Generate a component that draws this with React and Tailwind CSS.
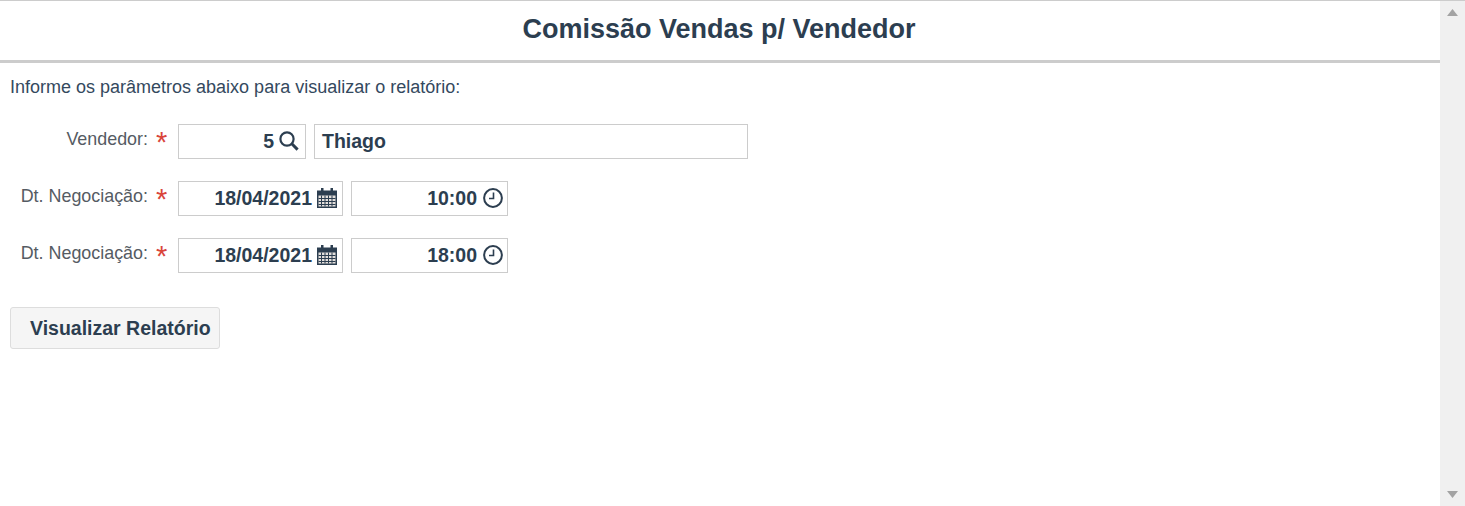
import React from "react";

const SearchIcon = () => (
  <svg width="20" height="20" viewBox="0 0 20 20" fill="none" stroke="#2c3e50" className="shrink-0">
    <circle cx="8" cy="8" r="6.6" strokeWidth="2.2" />
    <path d="M12.8 12.8 L18.6 18.6" strokeWidth="3" />
  </svg>
);

const CalendarIcon = () => (
  <svg width="20" height="20" viewBox="0 0 20 20" className="shrink-0">
    <path fill="#2c3e50" d="M0 2.5h4V0h2.5v2.5h7V0H16v2.5h4V20H0z" />
    <rect x="1.5" y="7.5" width="17" height="11" fill="#e3dfdc" />
    <g fill="#2c3e50">
      <rect x="4" y="7.5" width="1" height="11" />
      <rect x="7.5" y="7.5" width="1" height="11" />
      <rect x="11" y="7.5" width="1" height="11" />
      <rect x="14.5" y="7.5" width="1" height="11" />
      <rect x="1.5" y="10" width="17" height="1" />
      <rect x="1.5" y="13" width="17" height="1" />
      <rect x="1.5" y="16" width="17" height="1" />
    </g>
  </svg>
);

const ClockIcon = () => (
  <svg width="20" height="20" viewBox="0 0 20 20" fill="none" stroke="#2c3e50" className="shrink-0 ml-[1px]">
    <circle cx="10" cy="10" r="8.9" strokeWidth="2" />
    <path d="M10.5 4.5V10.5H6" strokeWidth="1.6" />
  </svg>
);

function Campo({ width, value, icon, left, pad = "pr-[5px]" }) {
  return (
    <div className={`${width} h-[35px] border border-[#cccccc] flex items-center bg-white shrink-0 ${left ? "pl-[7px]" : `justify-end ${pad}`}`}>
      <span className="text-[19.5px] font-bold text-[#2c3e50] leading-none">{value}</span>
      {icon && <span className="ml-[5px] flex -mt-[1px]">{icon}</span>}
    </div>
  );
}

function Label({ children }) {
  return (
    <div className="w-[178px] flex items-start justify-end pr-[10px] shrink-0 pt-[4px]">
      <span className="text-[#555b63] text-[17.9px] leading-[22px]">{children}</span>
      <span className="text-[#d9453b] text-[29px] leading-[29px] font-normal ml-[8px] w-[12px]">*</span>
    </div>
  );
}

export default function App() {
  return (
    <div className="h-[506px] w-[1465px] overflow-hidden bg-white font-['Liberation_Sans',Arial,sans-serif] border-t border-[#cccccc] flex">
      <div className="flex-1 min-w-0">
        <header className="h-[62px] border-b-[3px] border-[#cccccc] flex items-center justify-center pb-[3px] pr-[2px]">
          <h1 className="text-[27px] font-bold text-[#2c3e50]">Comissão Vendas p/ Vendedor</h1>
        </header>

        <p className="pl-[10px] pt-[13px] text-[18px] leading-[22px] text-[#34495e]">
          Informe os parâmetros abaixo para visualizar o relatório:
        </p>

        <div className="mt-[26px] flex flex-col gap-[22px]">
          <div className="flex">
            <Label>Vendedor:</Label>
            <Campo width="w-[128px]" value="5" icon={<SearchIcon />} pad="pr-[6px]" />
            <div className="ml-[8px]">
              <Campo width="w-[434px]" value="Thiago" left />
            </div>
          </div>
          <div className="flex">
            <Label>Dt. Negociação:</Label>
            <Campo width="w-[165px]" value="18/04/2021" icon={<CalendarIcon />} />
            <div className="ml-[8px]">
              <Campo width="w-[157px]" value="10:00" icon={<ClockIcon />} pad="pr-[4px]" />
            </div>
          </div>
          <div className="flex">
            <Label>Dt. Negociação:</Label>
            <Campo width="w-[165px]" value="18/04/2021" icon={<CalendarIcon />} />
            <div className="ml-[8px]">
              <Campo width="w-[157px]" value="18:00" icon={<ClockIcon />} pad="pr-[4px]" />
            </div>
          </div>
        </div>

        <button
          type="button"
          className="ml-[10px] mt-[34px] w-[210px] h-[42px] border border-[#dddddd] rounded-[3px] bg-[#f5f5f5] text-[19.5px] font-bold text-[#2c3e50] text-left pl-[19px] pt-[2px]"
        >
          Visualizar Relatório
        </button>
      </div>

      <div className="w-[25px] shrink-0 bg-[#f0f0f0] flex flex-col items-center justify-between pt-[8px] pb-[8px]">
        <svg width="11" height="7" viewBox="0 0 11 7"><path d="M5.5 0L11 7H0z" fill="#a3a3a3" /></svg>
        <svg width="11" height="7" viewBox="0 0 11 7"><path d="M0 0H11L5.5 7z" fill="#a3a3a3" /></svg>
      </div>
    </div>
  );
}
